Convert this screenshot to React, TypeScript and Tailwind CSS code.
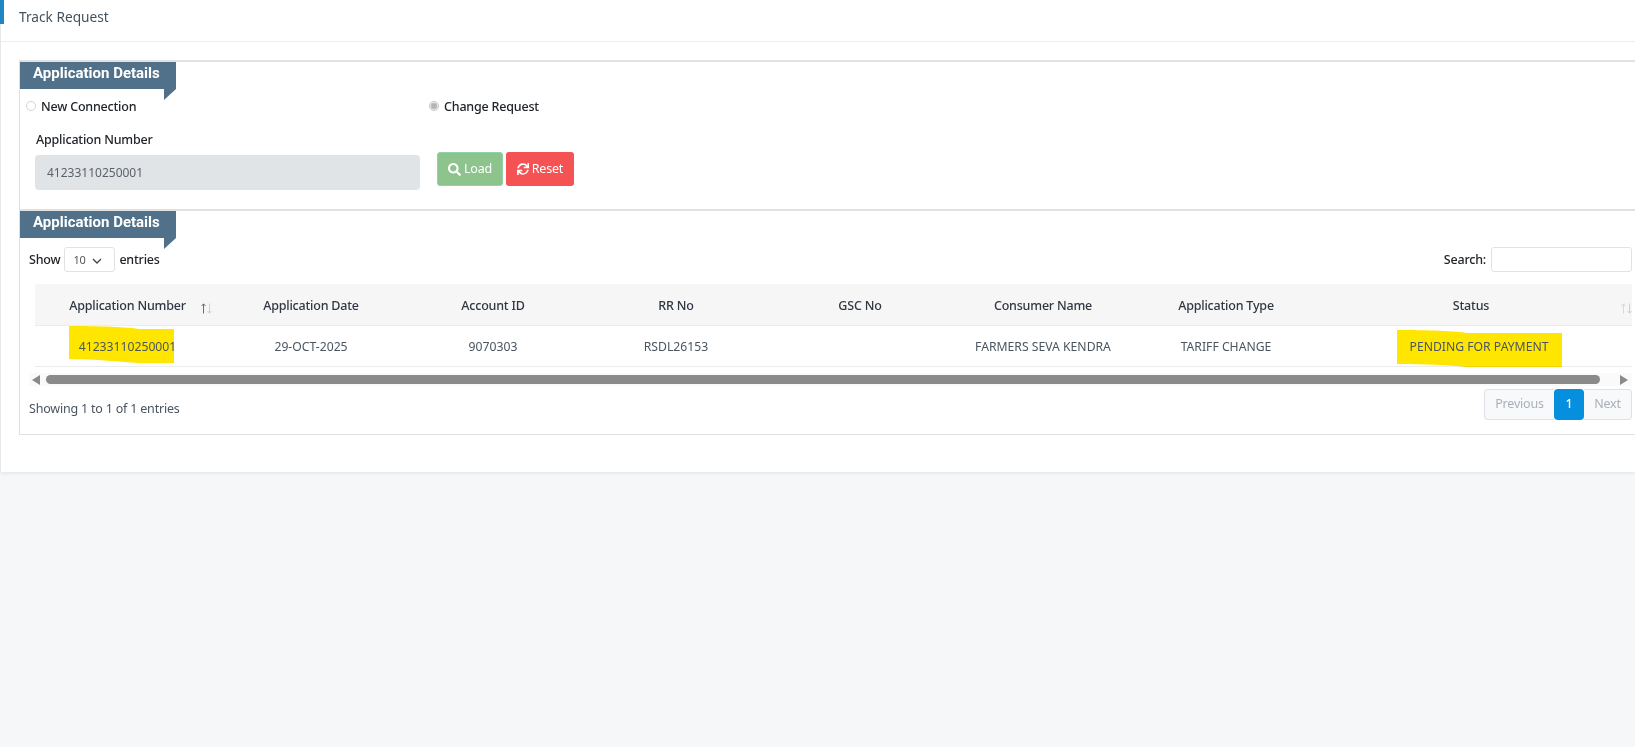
import React from "react";
import { FaSearch, FaSync } from "react-icons/fa";

const sans = "font-['Noto_Sans',sans-serif]";

function Tab() {
  return (
    <div className="relative h-[27px] w-[156px] bg-[#51718a] pl-[13px] font-['Roboto',sans-serif] text-[15px] font-bold leading-[23px] text-white">
      Application Details
      <svg className="absolute left-[144px] top-[27px]" width="12" height="11" viewBox="0 0 12 11">
        <polygon points="0,0 12,0 0,11" fill="#51718a" />
      </svg>
    </div>
  );
}

function Radio({ checked, label }: { checked?: boolean; label: string }) {
  return (
    <div className="flex items-center">
      <span className={`flex h-[10px] w-[10px] items-center justify-center rounded-full border ${checked ? "border-[#c9c9c9] bg-[#e8e8e8]" : "border-[#d4d4d4] bg-white"}`}>
        {checked && <span className="h-[6px] w-[6px] rounded-full bg-[#b5b5b5]" />}
      </span>
      <span className="ml-[5px] pt-[2px] text-[12.5px] font-medium tracking-[-0.2px] text-[#212529]">{label}</span>
    </div>
  );
}

function Sort({ light }: { light?: boolean }) {
  return (
    <svg width="12" height="11" viewBox="0 0 12 11" fill="none" strokeWidth="1">
      <path d="M3.5 10.5V1M1.5 3L3.5 .8 5.5 3" stroke={light ? "#d8d8d8" : "#6f6f60"} />
      <path d="M9.5 .5V10M7.5 8L9.5 10.2 11.5 8" stroke="#d0d0d0" />
    </svg>
  );
}

const headers = ["Application Number", "Application Date", "Account ID", "RR No", "GSC No", "Consumer Name", "Application Type", "Status"];
const cells = ["41233110250001", "29-OCT-2025", "9070303", "RSDL26153", "", "FARMERS SEVA KENDRA", "TARIFF CHANGE", "PENDING FOR PAYMENT"];
const cols = "grid grid-cols-[185px_182px_182px_184px_184px_182px_184px_314px]";

export default function App() {
  return (
    <div className={`${sans} h-[747px] w-[1635px] overflow-hidden bg-[#f6f7f9]`}>
      <div className="h-[472px] border-l border-[#e6e8eb] bg-white shadow-[0_2px_3px_rgba(0,0,0,0.06)]">
        <div className="relative h-[42px] border-b border-[#eeeeee] pl-[18px] pt-[6px] text-[13.7px] leading-[22px] text-[#44525f]">
          <span className="absolute -left-px top-0 h-[24px] w-[4px] bg-[#1f86c4]" />
          Track Request
        </div>

        <div className="ml-[18px] mt-[18px] h-[149px] border-l border-t-2 border-[#e1e1e1]">
          <Tab />
          <div className="mt-[7px] flex h-5 pl-[6px]">
            <div className="w-[403px]"><Radio label="New Connection" /></div>
            <Radio checked label="Change Request" />
          </div>
          <div className="ml-[16px] mt-[14px] h-5 text-[12.5px] font-medium leading-5 tracking-[-0.2px] text-[#212529]">Application Number</div>
          <div className="mt-[2px] flex items-start">
            <div className="ml-[15px] mt-[3px] flex h-[35px] w-[385px] items-center rounded-[4px] bg-[#e1e4e7] pl-3 text-[12px] text-[#5c6268]">41233110250001</div>
            <button className="ml-[17px] flex h-[34px] w-[66px] items-center justify-center gap-[3px] rounded-[3px] border border-[#8fd3a5] bg-[#8dc38d] text-[12.5px] tracking-[-0.2px] text-white">
              <FaSearch className="h-[13px] w-[13px]" /> Load
            </button>
            <button className="ml-[3px] flex h-[34px] w-[68px] items-center justify-center gap-[3px] rounded-[3px] bg-[#f55253] text-[12.5px] tracking-[-0.2px] text-white">
              <FaSync className="h-[12px] w-[12px]" /> Reset
            </button>
          </div>
        </div>

        <div className="ml-[18px] h-[226px] border-b border-l border-t-2 border-[#e1e1e1]">
          <Tab />
          <div className="mt-[9px] flex h-[25px] items-center pl-[9px] pr-[3px] text-[12.5px] font-medium tracking-[-0.2px] text-[#212529]">
            <span className="pt-[2px]">Show</span>
            <span className="ml-[4px] flex h-[25px] w-[51px] items-center justify-between rounded-[3px] border border-[#e2e2e2] pl-2 pr-[12px] pt-[2px] text-[11px] font-normal text-[#555555]">
              10
              <svg width="10" height="6" viewBox="0 0 10 6" fill="none"><path d="M1 1l4 4 4-4" stroke="#444" strokeWidth="1.3" /></svg>
            </span>
            <span className="ml-[4px] pt-[2px]">entries</span>
            <span className="ml-auto pt-[2px]">Search:</span>
            <span className="ml-[5px] h-[25px] w-[141px] rounded-[3px] border border-[#e2e2e2]" />
          </div>

          <div className="ml-[15px] mr-[3px] mt-[12px]">
            <div className={`${cols} h-[42px] items-center border-b border-[#ececec] bg-[#f6f6f6] pt-[3px] text-[12.5px] font-medium tracking-[-0.2px] text-[#2f3742]`}>
              {headers.map((h, i) => (
                <div key={h} className={`relative text-center ${i === 7 ? "pr-2" : ""}`}>
                  {h}
                  {i === 0 && <span className="absolute left-[165px] top-[6px]"><Sort /></span>}
                  {i === 7 && <span className="absolute right-0 top-[6px]"><Sort light /></span>}
                </div>
              ))}
            </div>
            <div className={`${cols} h-[41px] items-center border-b border-[#ececec] pt-[2px] text-[12.2px] text-[#4a5560]`}>
              {cells.map((c, i) => (
                <div key={i} className={`relative text-center ${i === 7 ? "pl-2" : ""}`}>
                  {i === 0 && (
                    <svg className="absolute left-[34px] top-[-12px] mix-blend-multiply" width="105" height="38" viewBox="0 0 105 38">
                      <path d="M0 0 C30 0 60 1 70 3 L105 3 L105 37 L70 37 C50 36 30 33 0 33Z" fill="#ffe600" />
                    </svg>
                  )}
                  {i === 7 && (
                    <svg className="absolute left-[79px] top-[-8px] mix-blend-multiply" width="165" height="37" viewBox="0 0 165 37">
                      <path d="M0 0 C30 0 60 1 70 3 L165 3 L165 37 L70 37 C50 35 30 34 0 34Z" fill="#ffe600" />
                    </svg>
                  )}
                  <span className="relative">{c}</span>
                </div>
              ))}
            </div>
          </div>

          <div className="ml-[9px] mr-[3px] mt-[6px] flex h-[13px] items-center bg-[#fafafa]">
            <svg className="ml-[3px]" width="8" height="10" viewBox="0 0 8 10"><polygon points="8,0 8,10 0,5" fill="#8a8a8a" /></svg>
            <div className="ml-[6px] h-[9px] w-[1554px] rounded-full bg-[#8a8a8a]" />
            <svg className="ml-[20px]" width="8" height="10" viewBox="0 0 8 10"><polygon points="0,0 0,10 8,5" fill="#8a8a8a" /></svg>
          </div>

          <div className="ml-[9px] mr-[3px] mt-[3px] flex h-[31px] items-center justify-between text-[12.5px] tracking-[-0.2px] text-[#4a5560]">
            <span className="pt-[10px]">Showing 1 to 1 of 1 entries</span>
            <div className="flex h-[31px] items-stretch text-[12.5px] text-[#a9b1b8]">
              <span className="flex w-[70px] items-center justify-center rounded-l-[4px] border border-r-0 border-[#dee2e6] bg-[#f8f9fa]">Previous</span>
              <span className="flex w-[30px] items-center justify-center rounded-[4px] bg-[#068fdf] font-medium text-white">1</span>
              <span className="flex w-[48px] items-center justify-center rounded-r-[4px] border border-l-0 border-[#dee2e6] bg-[#f8f9fa]">Next</span>
            </div>
          </div>
        </div>
      </div>
    </div>
  );
}
